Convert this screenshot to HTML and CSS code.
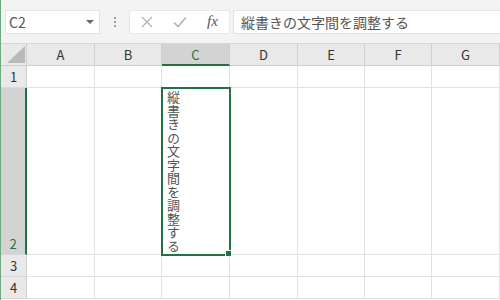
FILE: index.html
```html
<!DOCTYPE html>
<html lang="ja">
<head>
    <meta charset="UTF-8">
    <title>縦書きの文字間を調整する</title>
    <link rel="stylesheet" href="styles.css">
</head>
<body>
    <div class="window">
        <div class="toolbar">
            <div class="name-box">
                <span>C2</span>
                <span class="caret"></span>
            </div>
            <div class="grip"><i></i><i></i><i></i></div>
            <div class="fx-buttons">
                <span class="btn">
                    <svg width="12" height="12" viewBox="0 0 12 12"><path d="M1 1 L11 11 M11 1 L1 11" stroke="#b4b4b4" stroke-width="1.3" fill="none"/></svg>
                </span>
                <span class="btn">
                    <svg width="14" height="12" viewBox="0 0 14 12"><path d="M1 6.5 L5 10.5 L13 1.5" stroke="#b4b4b4" stroke-width="1.6" fill="none"/></svg>
                </span>
                <span class="btn fx">fx</span>
            </div>
            <div class="formula">縦書きの文字間を調整する</div>
        </div>

        <div class="sheet">
            <div class="corner">
                <svg width="18" height="17" viewBox="0 0 18 17"><path d="M0 17 L18 17 L18 0 Z" fill="#b9b9b9"/></svg>
            </div>
            <div class="col-head">A</div>
            <div class="col-head">B</div>
            <div class="col-head active">C</div>
            <div class="col-head">D</div>
            <div class="col-head">E</div>
            <div class="col-head">F</div>
            <div class="col-head">G</div>

            <div class="row-head">1</div>
            <div class="cell"></div><div class="cell"></div><div class="cell"></div><div class="cell"></div><div class="cell"></div><div class="cell"></div><div class="cell"></div>

            <div class="row-head active tall">2</div>
            <div class="cell"></div><div class="cell"></div>
            <div class="cell selected"><div class="vertical">縦書きの文字間を調整する</div></div>
            <div class="cell"></div><div class="cell"></div><div class="cell"></div><div class="cell"></div>

            <div class="row-head">3</div>
            <div class="cell"></div><div class="cell"></div><div class="cell"></div><div class="cell"></div><div class="cell"></div><div class="cell"></div><div class="cell"></div>

            <div class="row-head">4</div>
            <div class="cell"></div><div class="cell"></div><div class="cell"></div><div class="cell"></div><div class="cell"></div><div class="cell"></div><div class="cell"></div>
        </div>
    </div>
</body>
</html>
```

FILE: styles.css
```css
body {
    margin: 0;
    font-family: "Noto Sans CJK JP", "Noto Sans", sans-serif;
    color: #444;
    background: #fff;
}

.window {
    width: 500px;
    height: 300px;
    overflow: hidden;
    border-left: 1px solid #6fa884; /* borde verde de la ventana */
    box-sizing: border-box;
}

/* barra de fórmulas */
.toolbar {
    height: 44px;
    background: #f3f3f3;
    display: flex;
    align-items: flex-start;
    padding: 10px 0 0 4px;
    box-sizing: border-box;
}

.name-box {
    width: 95px;
    height: 24px;
    background: #fff;
    border: 1px solid #e3e3e3;
    box-sizing: border-box;
    display: flex;
    align-items: center;
    justify-content: space-between;
    padding: 0 5px 0 3px;
    font-size: 14px;
    color: #555;
}

.caret {
    width: 0;
    height: 0;
    border-left: 4px solid transparent;
    border-right: 4px solid transparent;
    border-top: 4px solid #666;
}

.grip {
    width: 29px;
    height: 24px;
    display: flex;
    flex-direction: column;
    align-items: center;
    justify-content: center;
    gap: 2px;
}

.grip i {
    width: 2px;
    height: 2px;
    background: #a0a0a0;
}

.fx-buttons {
    width: 101px;
    height: 24px;
    background: #fff;
    border: 1px solid #e8e8e8;
    box-sizing: border-box;
    display: flex;
    align-items: center;
}

.btn {
    width: 33px;
    display: flex;
    justify-content: center;
    align-items: center;
}

.btn.fx {
    font-family: "Liberation Serif", serif;
    font-style: italic;
    font-size: 15px;
    color: #555;
    margin-top: -2px;
}

.formula {
    flex: 1;
    height: 24px;
    margin-left: 3px;
    background: #fff;
    border: 1px solid #e3e3e3;
    border-right: none;
    box-sizing: border-box;
    padding-left: 7px;
    font-size: 14px;
    line-height: 22px;
    color: #555;
}

/* hoja */
.sheet {
    display: grid;
    grid-template-columns: 26px 68px 67px 68px 68px 67px 67px 68px;
    grid-template-rows: 22px 22px 167px 22px 22px 1px;
    border-top: 1px solid #d6d6d6;
    margin-top: -1px;
}

.corner {
    background: #e9e9e9;
    border-right: 1px solid #cfcfcf;
    border-bottom: 1px solid #cfcfcf;
    display: flex;
    align-items: flex-end;
    justify-content: flex-end;
    padding: 0 1px 2px 0;
}

.col-head {
    background: #e9e9e9;
    border-right: 1px solid #cfcfcf;
    border-bottom: 1px solid #cfcfcf;
    text-align: center;
    font-size: 13px;
    line-height: 21px;
    color: #333;
}

.col-head.active {
    background: #d3d3d3;
    border-bottom: 2px solid #217346;
    color: #217346;
}

.row-head {
    background: #e9e9e9;
    border-right: 1px solid #cfcfcf;
    border-bottom: 1px solid #d8d8d8;
    text-align: center;
    font-size: 13px;
    line-height: 21px;
    color: #333;
}

.row-head.active {
    background: #d3d3d3;
    border-right: 2px solid #217346;
    color: #217346;
}

.row-head.tall {
    display: flex;
    align-items: flex-end;
    justify-content: center;
}

.cell {
    border-right: 1px solid #e1e1e1;
    border-bottom: 1px solid #e1e1e1;
}

.cell.selected {
    position: relative;
    outline: 2px solid #217346;
    outline-offset: -1px;
    padding: 3px 0 0 4px;
}

.cell.selected::after {
    content: "";
    position: absolute;
    right: -3px;
    bottom: -3px;
    width: 5px;
    height: 5px;
    background: #217346;
    border: 1px solid #fff;
}

.vertical {
    writing-mode: vertical-rl;
    text-orientation: upright;
    font-size: 13px;
    letter-spacing: 0.5px;
    line-height: 14px;
    color: #555;
}
```
